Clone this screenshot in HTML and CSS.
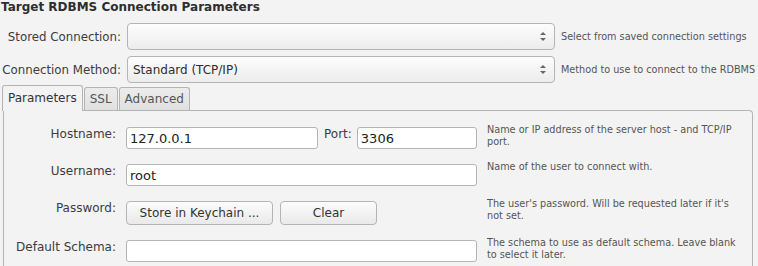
FILE: index.html
```html
<!DOCTYPE html>
<html lang="en">
<head>
  <meta charset="UTF-8">
  <title>Target RDBMS Connection Parameters</title>
  <link rel="stylesheet" href="styles.css">
</head>
<body>
  <h1 class="title">Target RDBMS Connection Parameters</h1>
  <div class="conn">
    <label class="conn-label">Stored Connection:</label>
    <div class="combo"><span class="combo-text"></span><span class="spin"><i class="up"></i><i class="down"></i></span></div>
    <span class="conn-desc">Select from saved connection settings</span>

    <label class="conn-label">Connection Method:</label>
    <div class="combo"><span class="combo-text">Standard (TCP/IP)</span><span class="spin"><i class="up"></i><i class="down"></i></span></div>
    <span class="conn-desc">Method to use to connect to the RDBMS</span>
  </div>

  <div class="tabs">
    <div class="tab active">Parameters</div>
    <div class="tab">SSL</div>
    <div class="tab">Advanced</div>
  </div>
  <div class="panel">
    <div class="form">
      <label class="label">Hostname:</label>
      <div class="field">
        <input class="entry host" type="text" value="127.0.0.1">
        <label class="label port-label">Port:</label>
        <input class="entry port" type="text" value="3306">
      </div>
      <p class="desc">Name or IP address of the server host - and TCP/IP port.</p>

      <label class="label">Username:</label>
      <div class="field">
        <input class="entry wide" type="text" value="root">
      </div>
      <p class="desc">Name of the user to connect with.</p>

      <label class="label">Password:</label>
      <div class="field">
        <button class="btn keychain">Store in Keychain ...</button>
        <button class="btn clear">Clear</button>
      </div>
      <p class="desc">The user's password. Will be requested later if it's not set.</p>

      <label class="label">Default Schema:</label>
      <div class="field">
        <input class="entry wide" type="text" value="">
      </div>
      <p class="desc">The schema to use as default schema. Leave blank to select it later.</p>
    </div>
  </div>
</body>
</html>
```

FILE: styles.css
```css
body {
  font-family: "DejaVu Sans", sans-serif;
  background-color: #f3f3f3;
  color: #3c3c3c;
  margin: 0;
  padding: 0;
  overflow: hidden;
}
.title {
  font-size: 12px;
  font-weight: bold;
  color: #2e2e2e;
  margin: 0;
  padding: 0 0 0 1px;
  height: 23px;
  line-height: 15px;
}
.conn {
  display: grid;
  grid-template-columns: 119px 428px auto;
  grid-template-rows: 27px 27px;
  row-gap: 6px;
  column-gap: 6px;
  align-items: center;
  padding-left: 2px;
}
.conn-label {
  font-size: 11.8px;
  text-align: right;
  white-space: nowrap;
}
.combo {
  height: 27px;
  box-sizing: border-box;
  border: 1px solid #b4b4b4;
  border-radius: 4px;
  background: linear-gradient(#fdfdfd, #ececec);
  display: flex;
  align-items: center;
  justify-content: space-between;
  padding: 0 8px 0 5px;
}
.combo-text {
  font-size: 12px;
  color: #2e2e2e;
}
.spin {
  display: flex;
  flex-direction: column;
  gap: 3px;
}
.spin i {
  width: 0;
  height: 0;
  border-left: 3px solid transparent;
  border-right: 3px solid transparent;
}
.spin .up {
  border-bottom: 3px solid #666;
}
.spin .down {
  border-top: 3px solid #666;
}
.conn-desc {
  font-size: 9.7px;
  color: #555;
  white-space: nowrap;
}
.tabs {
  display: flex;
  align-items: flex-end;
  gap: 1px;
  padding-left: 2px;
  margin-top: 1px;
  height: 26px;
  position: relative;
  z-index: 1;
}
.tab {
  font-size: 12px;
  color: #555;
  height: 23px;
  box-sizing: border-box;
  padding: 4px 5px 0 5px;
  border: 1px solid #b4b4b4;
  border-bottom: none;
  border-radius: 3px 3px 0 0;
  background: linear-gradient(#ececec, #e0e0e0);
}
.tab.active {
  height: 26px;
  color: #333;
  background: #f3f3f3;
  padding: 5px 5px 0 5px;
  margin-bottom: -1px;
}
.panel {
  border: 1px solid #b4b4b4;
  border-bottom: none;
  border-radius: 0 4px 0 0;
  margin: 0 5px 0 3px;
  padding-top: 16px;
  height: 200px;
}
.form {
  display: grid;
  grid-template-columns: 112px 351px 1fr;
  grid-template-rows: 22px 22px 24px 22px;
  row-gap: 15px;
  column-gap: 10px;
  align-items: start;
}
.label {
  font-size: 12px;
  line-height: 15px;
  text-align: right;
}
.field {
  display: flex;
  align-items: flex-start;
}
.entry {
  font-family: "DejaVu Sans", sans-serif;
  font-size: 13px;
  color: #222;
  height: 22px;
  box-sizing: border-box;
  border: 1px solid #b4b4b4;
  border-radius: 3px;
  background: #fff;
  padding: 0 3px;
  margin: 0;
}
.host {
  width: 192px;
}
.port-label {
  margin: 0 5px 0 6px;
}
.port {
  width: 120px;
}
.wide {
  width: 351px;
}
.btn {
  font-family: "DejaVu Sans", sans-serif;
  font-size: 12px;
  color: #333;
  height: 24px;
  box-sizing: border-box;
  border: 1px solid #b4b4b4;
  border-radius: 4px;
  background: linear-gradient(#fcfcfc, #e9e9e9);
  padding: 0;
  margin: 0;
}
.keychain {
  width: 147px;
}
.clear {
  width: 97px;
  margin-left: 7px;
}
.desc {
  font-size: 9.7px;
  line-height: 12px;
  color: #555;
  margin: -3px 0 0 0;
  padding-right: 6px;
}
```
